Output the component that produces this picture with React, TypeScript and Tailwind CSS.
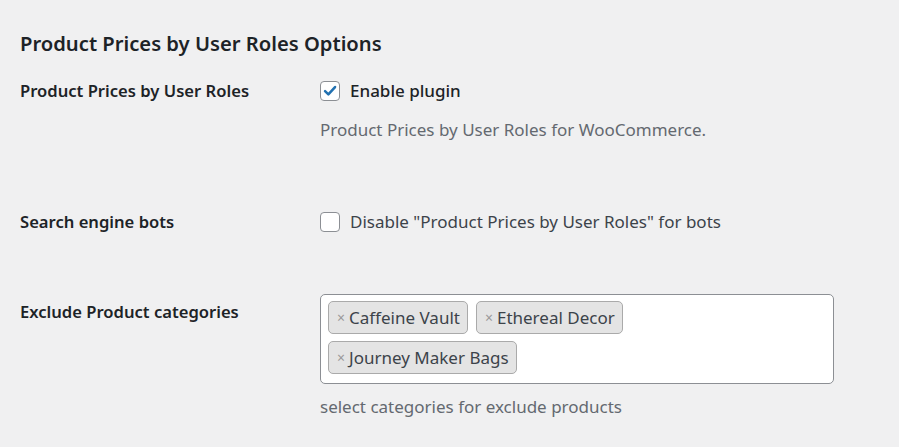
import React from "react";

const font = { fontFamily: '"Noto Sans", "Open Sans", sans-serif' };

const Checkbox = ({ checked }: { checked?: boolean }) => (
  <span className="flex h-[20px] w-[20px] shrink-0 items-center justify-center rounded-[4px] border border-[#8c8f94] bg-white">
    {checked && (
      <svg viewBox="0 0 20 20" className="h-[18px] w-[18px]">
        <path d="M4.5 10.2 L8.2 13.8 L15.6 5.6" fill="none" stroke="#2271b1" strokeWidth="2.8" strokeLinecap="round" strokeLinejoin="round" />
      </svg>
    )}
  </span>
);

const Tag = ({ label }: { label: string }) => (
  <span className="flex h-[33px] items-center rounded-[5px] border border-[#aaaaaa] bg-[#e4e4e4] pl-[8px] pr-[7px] text-[17px] text-[#3c434a]">
    <span className="mr-[4px] text-[14px] text-[#999999]">×</span>
    {label}
  </span>
);

export default function App() {
  return (
    <div className="min-h-[447px] w-full bg-[#f0f0f1] px-[20px] pt-[28px] text-[#1d2327]" style={font}>
      <h2 className="text-[20.2px] font-semibold leading-[30px]">Product Prices by User Roles Options</h2>

      {/* enable */}
      <div className="mt-[22px] flex">
        <div className="w-[300px] shrink-0 text-[16.6px] font-semibold leading-[22px]">Product Prices by User Roles</div>
        <div className="flex flex-col">
          <label className="flex h-[22px] items-center gap-[10px] text-[17px] font-medium">
            <Checkbox checked />
            Enable plugin
          </label>
          <p className="mt-[16px] text-[17px] leading-[24px] text-[#646970]">Product Prices by User Roles for WooCommerce.</p>
        </div>
      </div>

      {/* bots */}
      <div className="mt-[69px] flex">
        <div className="w-[300px] shrink-0 text-[16.6px] font-semibold leading-[22px]">Search engine bots</div>
        <label className="flex h-[22px] items-center gap-[10px] text-[17px] text-[#3c434a]">
          <Checkbox />
          Disable "Product Prices by User Roles" for bots
        </label>
      </div>

      {/* categories */}
      <div className="mt-[61px] flex">
        <div className="w-[300px] shrink-0 pt-[7px] text-[16.6px] font-semibold leading-[22px]">Exclude Product categories</div>
        <div className="flex flex-col">
          <div className="flex h-[90px] w-[514px] flex-wrap content-start gap-x-[8px] gap-y-[7px] rounded-[5px] border border-[#8c8f94] bg-white pl-[7px] pr-[40px] pt-[6px]">
            <Tag label="Caffeine Vault" />
            <Tag label="Ethereal Decor" />
            <Tag label="Journey Maker Bags" />
          </div>
          <p className="mt-[11px] text-[17px] leading-[24px] text-[#646970]">select categories for exclude products</p>
        </div>
      </div>
    </div>
  );
}
